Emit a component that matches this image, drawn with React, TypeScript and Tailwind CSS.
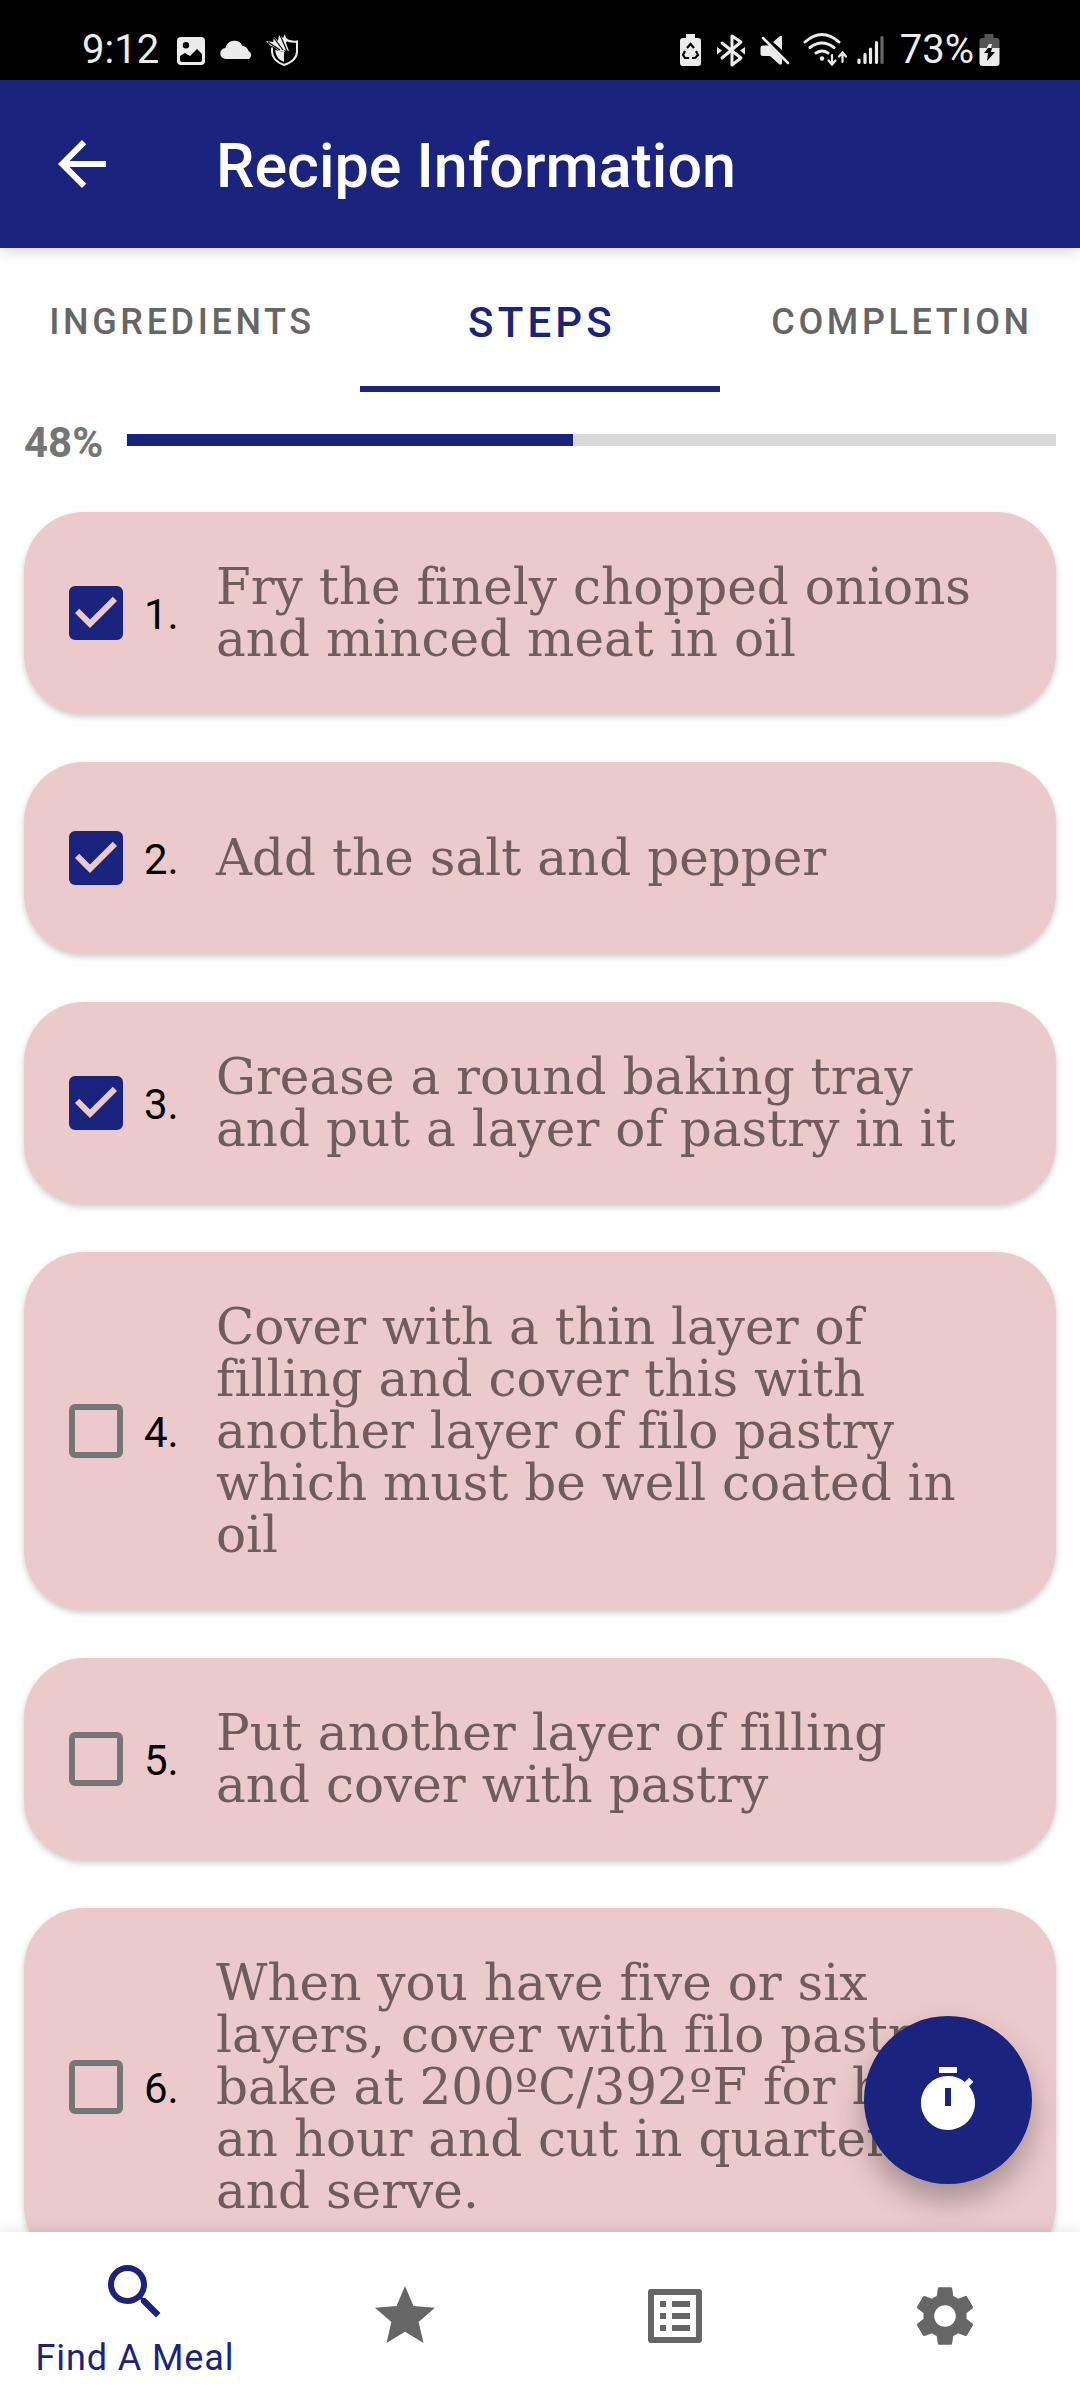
import { useState } from 'react';
import type { ReactNode } from 'react';
import { MdArrowBack, MdListAlt, MdSearch, MdSettings, MdStar } from 'react-icons/md';

const steps = [
  { text: 'Fry the finely chopped onions and minced meat in oil', done: true },
  { text: 'Add the salt and pepper', done: true },
  { text: 'Grease a round baking tray and put a layer of pastry in it', done: true },
  {
    text: 'Cover with a thin layer of filling and cover this with another layer of filo pastry which must be well coated in oil',
    done: false,
  },
  { text: 'Put another layer of filling and cover with pastry', done: false },
  {
    text: 'When you have five or six layers, cover with filo pastry, bake at 200ºC/392ºF for half an hour and cut in quarters and serve.',
    done: false,
  },
];

function StatusBar() {
  return (
    <div className="flex h-20 shrink-0 items-center justify-between bg-black pt-5 pr-[78px] pl-[82px] text-[40px] leading-[48px] text-[#ececec]">
      <div className="flex items-center">
        <span>9:12</span>
        <svg className="ml-4 h-9 w-[124px]" viewBox="174 32 124 36" fill="currentColor" aria-hidden="true">
          <path
            fillRule="evenodd"
            d="M180 37h20a4 4 0 0 1 4 4v20a4 4 0 0 1-4 4h-20a4 4 0 0 1-4-4V41a4 4 0 0 1 4-4zm5 5a3.200 3.200 0 1 0 0 6.400a3.200 3.200 0 0 0 0-6.400zM179 56v4q0 2 2 2h18q2 0 2-2v-6l-5-5-7 7-5-3z"
          />
          <path d="M225 59a5 5 0 0 1-.5-11 9 9 0 0 1 17-2 7 7 0 0 1 6 5A4.500 4.500 0 0 1 248 59z" />
          <path d="M284 39.500q6 3 12 2v10q0 9-13 13.500-12-4.500-12-13.500v-4" fill="none" stroke="currentColor" strokeWidth="2" />
          <path d="M274 50l9 2v10q-8-3-9-12z" />
          <path d="M265 41l7 1 1-5 4 4 1-6 4 3 2-4 1 4 2 1-2 4 3 8-5-1 1 2-6-1-5-4-3-1z" />
          <path d="M267 42l12 8M273 38l9 12M279 35l7 16" stroke="#000" strokeWidth="1.200" />
        </svg>
      </div>
      <div className="flex items-center">
        <svg className="mr-3.5 h-9 w-[208px]" viewBox="678 32 208 36" fill="none" aria-hidden="true">
          <path fill="currentColor" d="M686 34h9v4h3a3 3 0 0 1 3 3v22a3 3 0 0 1-3 3h-15a3 3 0 0 1-3-3V41a3 3 0 0 1 3-3h3z" />
          <path stroke="#000" strokeWidth="2.200" d="M687 48l3.500-4 3.500 4M696 51l2 4-3 3h-3M689 58h-4l-2-3 2-4" />
          <path stroke="currentColor" strokeWidth="3" strokeLinejoin="round" strokeLinecap="round" d="M722 43l19 15-9 7V36l9 6-19 16" />
          <path fill="currentColor" d="M717 47l5 3.500-5 4zM745 47l-5 3.500 5 4z" />
          <path fill="currentColor" d="M760.500 48q0-2.500 2.500-2.500h6l13 13v5q-1 2-3 .5l-9-8h-7q-2.500 0-2.500-2.500zM773 42l7-6q2-1 2 1v13z" />
          <path stroke="#000" strokeWidth="2" d="M765 37l25 25.500" />
          <path stroke="currentColor" strokeWidth="2.500" strokeLinecap="round" d="M763 38l25 25" />
          <g stroke="currentColor" strokeWidth="3" strokeLinecap="round">
            <path d="M805 42q17-15 34 0M810 47.500q12-9 24 0M816 53q6-4 12 0" />
            <path strokeWidth="2.200" d="M832 55v9M828.500 60.500l3.500 4 3.500-4M842.500 62v-9M839 56.500l3.500-4 3.500 4" />
          </g>
          <circle cx="822" cy="58.500" r="2.200" fill="currentColor" />
          <g stroke="currentColor" strokeWidth="3.200" strokeLinecap="round">
            <path d="M859 60v2.500M865 54.500v8M870.500 49v13.500M876.500 42.500v20" />
            <path stroke="#666" d="M882 37.500v25" />
          </g>
        </svg>
        <span>73%</span>
        <svg className="ml-1 h-9 w-6" viewBox="977 32 24 36" aria-hidden="true">
          <path fill="#555" d="M983.500 34h9v4h3a3 3 0 0 1 3 3v8h-20v-8a3 3 0 0 1 3-3h2z" />
          <path fill="currentColor" d="M978.500 48h20v15a3 3 0 0 1-3 3h-14a3 3 0 0 1-3-3z" />
          <path fill="currentColor" d="M988 44l3 0-1 5h-5z" />
          <path fill="#000" d="M987 48l-4 5h4l-1 8 8-9h-4l1-4z" />
        </svg>
      </div>
    </div>
  );
}

function Tab({ label, selected, onSelect }: { label: string; selected: boolean; onSelect: () => void }) {
  return (
    <button
      type="button"
      role="tab"
      aria-selected={selected}
      onClick={onSelect}
      className={
        selected
          ? 'border-b-6 border-[#1a237e] pt-2.5 pl-1 text-[42px] font-medium tracking-widest text-[#1a237e]'
          : 'border-b-6 border-transparent pt-2.5 pl-1 text-[36px] font-medium tracking-widest text-[#666666]'
      }
    >
      {label}
    </button>
  );
}

function StepCard({ index, text, initial }: { index: number; text: string; initial: boolean }) {
  const [done, setDone] = useState(initial);
  return (
    <li className="shrink-0 rounded-[60px] bg-[#eccacc] shadow-[0_3px_6px_rgba(0,0,0,0.2)]">
      <label className="flex min-h-48 items-center py-[49px] pr-[72px] pl-[45px]">
        <span className="relative flex shrink-0">
          <input
            type="checkbox"
            checked={done}
            onChange={() => setDone(!done)}
            className="size-[54px] appearance-none rounded-md border-6 border-[#757575] checked:border-[#1a237e] checked:bg-[#1a237e]"
          />
          {done && (
            <svg className="pointer-events-none absolute inset-0 size-full" viewBox="3 3 18 18" fill="#eccacc" aria-hidden="true">
              <path d="M10 17l-5-5 1.410-1.410L10 14.170l7.590-7.590L19 8z" />
            </svg>
          )}
        </span>
        <span className="w-[93px] shrink-0 pt-1 pl-[21px] text-[42px] leading-[50px] text-black">{index}.</span>
        <span className="font-['DejaVu_Serif',serif] text-[50px] leading-[52px] text-[#6f5d5e] [font-variant-ligatures:none]">
          {text}
        </span>
      </label>
    </li>
  );
}

function TimerIcon() {
  return (
    <svg className="size-18" viewBox="0 0 24 24" fill="currentColor" aria-hidden="true">
      <path d="M9 1h6v2H9z" />
      <path
        fillRule="evenodd"
        d="M19.030 7.390l1.420-1.420c-.43-.51-.9-.99-1.410-1.410l-1.420 1.420A8.962 8.962 0 0 0 12 4c-4.970 0-9 4.030-9 9s4.020 9 9 9a8.994 8.994 0 0 0 7.030-14.610zM13 14h-2V8h2z"
      />
    </svg>
  );
}

function NavItem({ name, icon, active = false }: { name: string; icon: ReactNode; active?: boolean }) {
  return (
    <a
      href="#"
      aria-label={name}
      className={
        active
          ? 'flex flex-1 flex-col items-center justify-center text-[#1a237e]'
          : 'flex flex-1 flex-col items-center justify-center text-[#666666]'
      }
    >
      {icon}
      {active && <span className="pt-3 text-[36px] leading-[36px] tracking-wide">{name}</span>}
    </a>
  );
}

export default function App() {
  const [tab, setTab] = useState('STEPS');
  return (
    <div className="flex h-screen flex-col overflow-hidden bg-white font-['Roboto',sans-serif]">
      <StatusBar />
      <header className="relative z-10 flex h-42 shrink-0 items-center bg-[#1a237e] pl-[46px] text-white shadow-[0_4px_12px_rgba(0,0,0,0.15)]">
        <button type="button" aria-label="Back">
          <MdArrowBack className="size-18" />
        </button>
        <h1 className="pt-1 pl-[98px] text-[61px] leading-[72px] font-medium">Recipe Information</h1>
      </header>
      <div role="tablist" className="grid h-36 shrink-0 grid-cols-3">
        {['INGREDIENTS', 'STEPS', 'COMPLETION'].map((label) => (
          <Tab key={label} label={label} selected={tab === label} onSelect={() => setTab(label)} />
        ))}
      </div>
      <main className="relative flex min-h-0 flex-1 flex-col">
        <div className="flex h-24 shrink-0 items-center gap-6 px-6">
          <span className="pt-1.5 text-[42px] leading-[48px] font-bold text-[#757575]">48%</span>
          <div role="progressbar" aria-label="Steps done" aria-valuenow={48} className="h-3 flex-1 bg-[#dadada]">
            <div className="h-full bg-[#1a237e]" style={{ width: '48%' }} />
          </div>
        </div>
        <ol className="flex min-h-0 flex-1 flex-col gap-12 overflow-hidden px-6 pt-6">
          {steps.map((step, i) => (
            <StepCard key={step.text} index={i + 1} text={step.text} initial={step.done} />
          ))}
        </ol>
        <button
          type="button"
          aria-label="Timer"
          className="absolute right-12 bottom-12 flex size-42 items-center justify-center rounded-full bg-[#1a237e] text-white shadow-[0_16px_30px_rgba(0,0,0,0.3)]"
        >
          <TimerIcon />
        </button>
      </main>
      <nav className="relative z-10 flex h-42 shrink-0 bg-white shadow-[0_-2px_12px_rgba(0,0,0,0.1)]">
        <NavItem name="Find A Meal" icon={<MdSearch className="size-18" />} active />
        <NavItem name="Favourites" icon={<MdStar className="size-18" />} />
        <NavItem name="Shopping List" icon={<MdListAlt className="size-18" />} />
        <NavItem name="Settings" icon={<MdSettings className="size-18" />} />
      </nav>
    </div>
  );
}
